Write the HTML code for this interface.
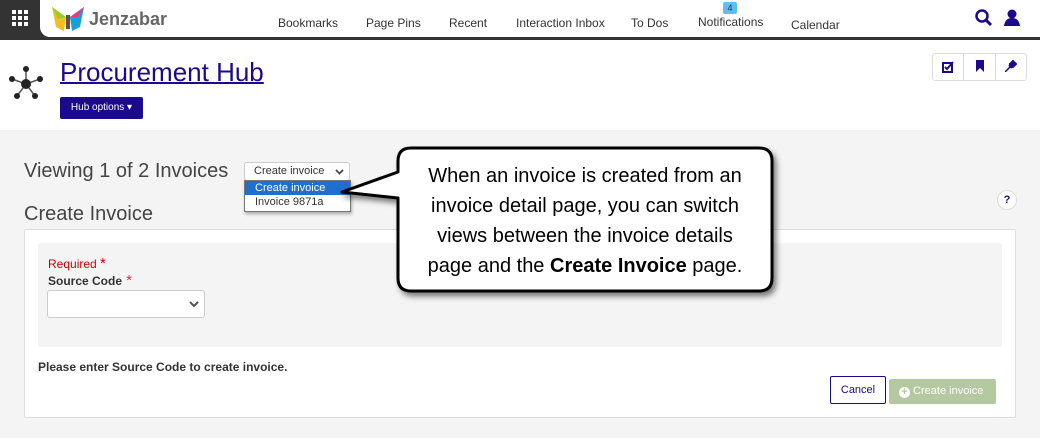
<!DOCTYPE html>
<html><head><style>
*{box-sizing:border-box;margin:0;padding:0}
body{width:1040px;height:438px;overflow:hidden;background:#f4f4f4;font-family:"Liberation Sans",Arial,sans-serif;position:relative}
.abs{position:absolute}
#top{left:0;top:0;width:1040px;height:130px;background:#fff}
#hdr{left:0;top:0;width:1040px;height:40px;background:#fff;border-bottom:3px solid #333}
.nav{top:16px;font-size:12px;color:#333}
</style></head><body>
<div class="abs" id="top"></div>
<div class="abs" id="hdr"></div>
<div class="abs" style="left:0;top:0;width:48px;height:40px;background:#333"></div>
<div class="abs" style="left:40px;top:0;width:40px;height:37px;background:#fff;border-bottom-left-radius:10px"></div>
<svg class="abs" style="left:12px;top:10px" width="16" height="16"><g fill="#fff"><rect x="0" y="0" width="4" height="4"/><rect x="6" y="0" width="4" height="4"/><rect x="12" y="0" width="4" height="4"/><rect x="0" y="6" width="4" height="4"/><rect x="6" y="6" width="4" height="4"/><rect x="12" y="6" width="4" height="4"/><rect x="0" y="12" width="4" height="4"/><rect x="6" y="12" width="4" height="4"/><rect x="12" y="12" width="4" height="4"/></g></svg>
<svg class="abs" style="left:50px;top:5px" width="36" height="28"><path d="M2 2 L16 12 L14 26 L6 22Z" fill="#f0c020"/><path d="M2 2 L16 12 L8 14Z" fill="#9c3"/><path d="M34 2 L20 12 L22 26 L30 22Z" fill="#1aa0d8"/><path d="M34 2 L20 12 L28 12Z" fill="#e03a8a"/><rect x="16" y="10" width="4" height="14" fill="#555"/></svg>
<div class="abs" style="left:89px;top:9px;font-size:18px;color:#666;font-weight:bold">Jenzabar</div>
<div class="abs nav" style="left:278px">Bookmarks</div>
<div class="abs nav" style="left:366px">Page Pins</div>
<div class="abs nav" style="left:449px">Recent</div>
<div class="abs nav" style="left:516px">Interaction Inbox</div>
<div class="abs nav" style="left:631px">To Dos</div>
<div class="abs nav" style="left:698px;top:15px">Notifications</div>
<div class="abs" style="left:723px;top:2px;width:14px;height:12px;background:#5bc0f0;border-radius:2px;font-size:9px;text-align:center;line-height:12px;color:#333">4</div>
<div class="abs nav" style="left:791px;top:18px">Calendar</div>
<svg class="abs" style="left:975px;top:9px" width="18" height="18"><circle cx="7" cy="7" r="5.5" fill="none" stroke="#1a0a8c" stroke-width="2.5"/><path d="M11 11 L16 16" stroke="#1a0a8c" stroke-width="3"/></svg>
<svg class="abs" style="left:1004px;top:9px" width="16" height="17"><circle cx="8" cy="5" r="4.5" fill="#1a0a8c"/><path d="M0 17 Q1 9 8 9 Q15 9 16 17Z" fill="#1a0a8c"/></svg>
<svg class="abs" style="left:6px;top:64px" width="40" height="40"><g stroke="#555" stroke-width="1.5"><line x1="20" y1="20" x2="20" y2="5"/><line x1="20" y1="20" x2="6" y2="15"/><line x1="20" y1="20" x2="34" y2="15"/><line x1="20" y1="20" x2="11" y2="32"/><line x1="20" y1="20" x2="29" y2="32"/></g><g fill="#222"><circle cx="20" cy="20" r="5"/><circle cx="20" cy="5" r="3"/><circle cx="6" cy="15" r="3"/><circle cx="34" cy="15" r="3"/><circle cx="11" cy="32" r="3"/><circle cx="29" cy="32" r="3"/></g></svg>
<div class="abs" style="left:60px;top:57px;font-size:26px;color:#1a0a8c;text-decoration:underline;text-decoration-thickness:2px">Procurement Hub</div>
<div class="abs" style="left:60px;top:97px;width:83px;height:22px;background:#1a0a8c;border-radius:2px;color:#fff;font-size:10px;line-height:22px;text-align:center">Hub options ▾</div>
<div class="abs" style="left:932px;top:53px;width:95px;height:28px;border:1px solid #ddd;border-radius:3px;background:#fff"></div>
<div class="abs" style="left:963px;top:54px;width:1px;height:26px;background:#ddd"></div>
<div class="abs" style="left:995px;top:54px;width:1px;height:26px;background:#ddd"></div>
<svg class="abs" style="left:942px;top:61px" width="12" height="12"><rect x="1" y="2" width="9" height="9" fill="none" stroke="#1a0a8c" stroke-width="2"/><path d="M3 6 L5 8 L11 1" stroke="#1a0a8c" stroke-width="2" fill="none"/></svg>
<svg class="abs" style="left:975px;top:60px" width="10" height="12"><path d="M1 0 H9 V12 L5 8 L1 12Z" fill="#1a0a8c"/></svg>
<svg class="abs" style="left:1005px;top:60px" width="12" height="12"><path d="M0 12 L6 6" stroke="#1a0a8c" stroke-width="1.5"/><path d="M5 4 L8 1 L11 4 L8 7Z M4 5 L7 8" fill="#1a0a8c" stroke="#1a0a8c" stroke-width="2"/></svg>
<div class="abs" style="left:24px;top:160px;font-size:20px;color:#444">Viewing 1 of 2 Invoices</div>
<div class="abs" style="left:24px;top:203px;font-size:20px;color:#444">Create Invoice</div>
<div class="abs" style="left:244px;top:162px;width:106px;height:19px;background:#fff;border:1px solid #ccc;border-radius:3px;font-size:11px;color:#333;padding:2px 9px">Create invoice<svg style="position:absolute;right:5px;top:6px" width="9" height="6"><path d="M1 1 L4.5 4.5 L8 1" stroke="#444" stroke-width="1.8" fill="none"/></svg></div>
<div class="abs" style="left:244px;top:180px;width:107px;height:32px;background:#fff;border:1px solid #777;font-size:11px;box-shadow:1px 2px 3px rgba(0,0,0,.3)">
<div style="background:#1e6fd0;color:#fff;padding:0 10px;height:14px;line-height:14px">Create invoice</div>
<div style="color:#333;padding:0 10px;height:14px;line-height:14px">Invoice 9871a</div></div>
<div class="abs" style="left:997px;top:190px;width:20px;height:20px;border-radius:50%;background:#fff;border:1px solid #ddd;font-size:11px;font-weight:bold;color:#1a0a8c;text-align:center;line-height:18px">?</div>
<div class="abs" style="left:24px;top:229px;width:992px;height:189px;background:#fff;border:1px solid #ddd;border-radius:2px"></div>
<div class="abs" style="left:38px;top:243px;width:964px;height:104px;background:#f4f4f4;border-radius:3px"></div>
<div class="abs" style="left:48px;top:255px;font-size:12px;color:#c00">Required <span style="font-size:15px">*</span></div>
<div class="abs" style="left:48px;top:272px;font-size:12px;color:#333;font-weight:bold">Source Code<span style="color:#d33;font-size:15px;font-weight:normal"> *</span></div>
<div class="abs" style="left:47px;top:290px;width:158px;height:28px;background:#fff;border:1px solid #ccc;border-radius:3px"><svg style="position:absolute;right:5px;top:10px" width="10" height="7"><path d="M1 1 L5 5 L9 1" stroke="#555" stroke-width="2" fill="none"/></svg></div>
<div class="abs" style="left:38px;top:360px;font-size:12px;font-weight:bold;color:#333">Please enter Source Code to create invoice.</div>
<div class="abs" style="left:830px;top:376px;width:56px;height:28px;border:1px solid #1a0a8c;border-radius:2px;background:#fff;font-size:11px;color:#1a0a8c;text-align:center;line-height:26px">Cancel</div>
<div class="abs" style="left:889px;top:379px;width:107px;height:25px;background:#b5c9a0;border-radius:2px;font-size:11px;color:#fff;line-height:25px;padding-left:10px"><span style="display:inline-block;width:11px;height:11px;border-radius:50%;background:#fff;color:#b5c9a0;font-size:11px;line-height:11px;text-align:center;font-weight:bold;vertical-align:-1px">+</span> Create invoice</div>
<svg class="abs" style="left:330px;top:140px" width="460" height="165">
<defs><filter id="s" x="-10%" y="-10%" width="130%" height="130%"><feDropShadow dx="3" dy="4" stdDeviation="3" flood-opacity=".5"/></filter></defs>
<path d="M81 8 H429 Q442 8 442 21 V138 Q442 151 429 151 H81 Q68 151 68 138 V58 L12 52 L68 32 V21 Q68 8 81 8Z" fill="#fff" stroke="#000" stroke-width="3" stroke-linejoin="round" filter="url(#s)"/>
<g font-family="Liberation Sans, DejaVu Sans, sans-serif" font-size="20" fill="#000" text-anchor="middle">
<text x="255" y="42">When an invoice is created from an</text>
<text x="255" y="72">invoice detail page, you can switch</text>
<text x="255" y="102">views between the invoice details</text>
<text x="255" y="132">page and the <tspan font-weight="bold">Create Invoice</tspan> page.</text>
</g></svg>
</body></html>
